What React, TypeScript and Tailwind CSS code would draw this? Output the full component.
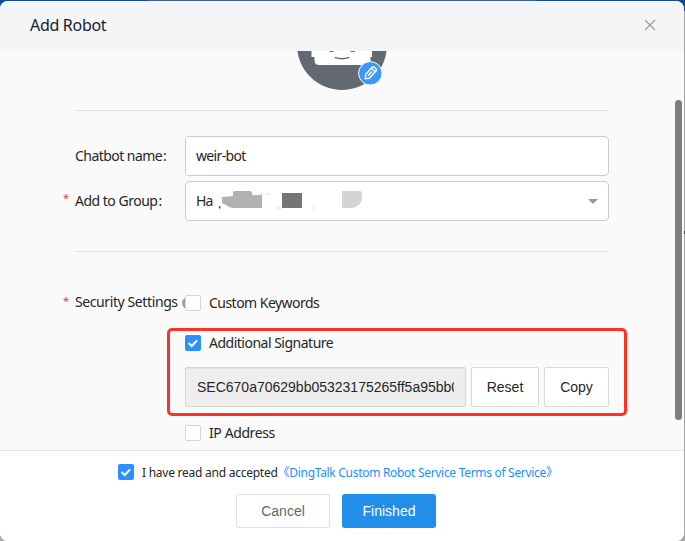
import type { ReactNode } from "react";

function CheckBox({ checked = false }: { checked?: boolean }) {
  return (
    <span
      className={
        checked
          ? "flex h-4 w-4 shrink-0 items-center justify-center rounded-[2px] bg-[#2c91fc]"
          : "flex h-4 w-4 shrink-0 rounded-[2px] border border-[#d6d6d6] bg-white"
      }
    >
      {checked && (
        <svg width="16" height="16" viewBox="0 0 16 16" fill="none" stroke="#fff" strokeWidth="2">
          <path d="M3.6 8.1 6.7 11 12.2 5.4" />
        </svg>
      )}
    </span>
  );
}

function Label({ children, required = false }: { children: ReactNode; required?: boolean }) {
  return (
    <div className="relative w-[110px] shrink-0 whitespace-nowrap">
      {required && (
        <span className="absolute -left-3 top-0 text-[11px] text-[#f5323c]">*</span>
      )}
      {children}
    </div>
  );
}

function Avatar() {
  return (
    <svg className="mx-auto block" width="90" height="39" viewBox="0 51 90 39">
      <circle cx="45" cy="45" r="45" fill="#626970" />
      <path d="M14.5 51H75V57H73.5V61Q73 65 69 65H22Q18 65 17.5 61V57H14.5Z" fill="#fff" />
      <path d="M32.5 51.3h4M53.5 51.3h4.5" stroke="#4f565d" strokeWidth="1" />
      <path d="M38.3 57.6Q45 59.8 51.7 57.6" fill="none" stroke="#626970" strokeWidth="1.5" strokeLinecap="round" />
      <circle cx="73.3" cy="73.3" r="11.7" fill="#3b98f8" stroke="#fff" strokeWidth="1" />
      <g transform="translate(73.3 73.3) rotate(42)" fill="none" stroke="#fff" strokeWidth="1.4" strokeLinejoin="round">
        <path d="M-2.7-5.8Q-2.7-7.2-1.3-7.2H1.3Q2.7-7.2 2.7-5.8V4L0 7.4-2.7 4ZM-2.7-4.5H2.7M0-2.5V3.5" />
      </g>
    </svg>
  );
}

export default function App() {
  return (
    <div className="relative h-[541px] w-[685px] overflow-hidden bg-[linear-gradient(#114a94_0_11px,#a6a7a9_11px)] pr-px pt-px font-['Noto_Sans','Noto_Sans_CJK_SC',sans-serif] text-[14px] text-[#262626]">
      <div className="absolute left-[147px] top-0 h-px w-[390px] bg-[#3a639e]" />
      <div className="relative flex h-[540px] flex-col overflow-hidden rounded-[8px] bg-white">
        <header className="flex h-[50px] shrink-0 items-center justify-between bg-[#f4f5f7] pl-[30px] pr-[28px]">
          <h1 className="pb-[2px] text-[16px] tracking-[-0.3px] text-[#16212d]">Add Robot</h1>
          <svg className="mb-[2px]" width="12" height="12" viewBox="0 0 12 12" stroke="#98999b" strokeWidth="1.1">
            <path d="M1 1 11 11M11 1 1 11" />
          </svg>
        </header>

        <main className="relative h-[399px] shrink-0 overflow-hidden bg-[#fafafa] pl-[75px] pr-[75px]">
          <Avatar />
          <hr className="mt-5 border-[#e2e2e2]" />

          <div className="mt-[25px] flex h-10 items-center">
            <Label><span className="block pb-[2px] tracking-[-0.55px]">Chatbot name<span className="ml-px">:</span></span></Label>
            <div className="flex h-10 flex-1 items-center rounded-[4px] border border-[#cbcbcb] bg-white px-2.5 pb-px tracking-[-0.65px]">
              weir-bot
            </div>
          </div>

          <div className="mt-[5px] flex h-10 items-center">
            <Label required><span className="block pb-[2px] tracking-[-0.5px]">Add to Group<span className="ml-px">:</span></span></Label>
            <div className="flex h-10 flex-1 items-center rounded-[4px] border border-[#cbcbcb] bg-white pl-2.5 pr-2.5">
              <span className="w-[21px] pb-px tracking-[-0.9px]">Ha</span>
              <svg width="152" height="22" viewBox="0 0 152 22">
                <path d="M2 16h1.5v2L2 19Z" fill="#555" />
                <path d="M5 7 16 6V3Q16 1 18 1H33Q35 1 35 3V5H45V18H16Q12 18 9 15L5 13Z" fill="#b0b1b0" />
                <path d="M36 5h4m2-1h4m3 0h3M60 18h5" stroke="#d5d6d5" />
                <path d="M65 3H85V18H65Z" fill="#757573" />
                <path d="M125 1H143Q145 1 145 4V8Q144 17 135 18H125Z" fill="#d3d4d4" />
                <path d="M96 18h1" stroke="#aaa" />
              </svg>
              <svg className="ml-auto" width="10" height="5" viewBox="0 0 10 5"><path d="M0 0H10L5 5Z" fill="#999" /></svg>
            </div>
          </div>

          <hr className="mt-[30px] border-[#e2e2e2]" />

          <div className="mt-[41px] flex items-start">
            <Label required>
              <span className="-mt-px block leading-5 tracking-[-0.4px]">Security Settings</span>
              <span className="absolute left-[107px] top-[4px] h-3 w-3 rounded-full bg-[#9aa0a6]" />
            </Label>
            <div className="relative flex-1">
              <div className="flex h-[20px] items-center gap-2">
                <CheckBox /><span className="pb-[2px] tracking-[-0.53px]">Custom Keywords</span>
              </div>
              <div className="mt-5 flex h-[20px] items-center gap-2">
                <CheckBox checked /><span className="pb-[2px] tracking-[-0.5px]">Additional Signature</span>
              </div>
              <div className="mt-[14px] flex h-10 gap-[5px] font-['Liberation_Sans',sans-serif]">
                <input
                  readOnly
                  value="SEC670a70629bb05323175265ff5a95bb0"
                  className="w-[281px] rounded-[2px] border border-[#d5d5d5] bg-[#eee] px-[11px] shadow-[inset_0_1px_1px_#00000010] outline-none"
                />
                <button className="w-[68px] rounded-[2px] border border-[#d9d9d9] bg-white">Reset</button>
                <button className="w-[65px] rounded-[2px] border border-[#d9d9d9] bg-white">Copy</button>
              </div>
              <div className="mt-4 flex h-[20px] items-center gap-2">
                <CheckBox /><span className="pb-[2px] tracking-[-0.4px]">IP Address</span>
              </div>
              <div className="absolute -left-[18px] top-[35px] h-[88px] w-[460px] rounded-[5px] border-[3px] border-[#fc3322]" />
            </div>
          </div>
          <div className="absolute right-[2px] top-[49px] h-[320px] w-[7px] rounded-full bg-[#7e7e7e]" />
        </main>

        <footer className="flex flex-1 flex-col border-t border-[#e2e2e2] bg-white">
          <div className="mt-[11px] flex h-5 items-center whitespace-nowrap pl-[118px] text-[12px]">
            <CheckBox checked />
            <span className="ml-2 pt-[2px] tracking-[-0.25px]">I have read and accepted</span>
            <span className="pt-[2px] tracking-[-0.3px] text-[#1890ff]">《DingTalk Custom Robot Service Terms of Service》</span>
          </div>
          <div className="mt-3 flex justify-center gap-3 pr-3 font-['Liberation_Sans',sans-serif]">
            <button className="h-[34px] w-[94px] rounded-[2px] border border-[#e0e0e0] bg-white text-[#666]">Cancel</button>
            <button className="h-[34px] w-[94px] rounded-[3px] bg-[#218ee9] text-white">Finished</button>
          </div>
        </footer>
      </div>
      <div className="absolute right-0 top-[231px] h-[3px] w-px bg-[#444]" />
    </div>
  );
}
